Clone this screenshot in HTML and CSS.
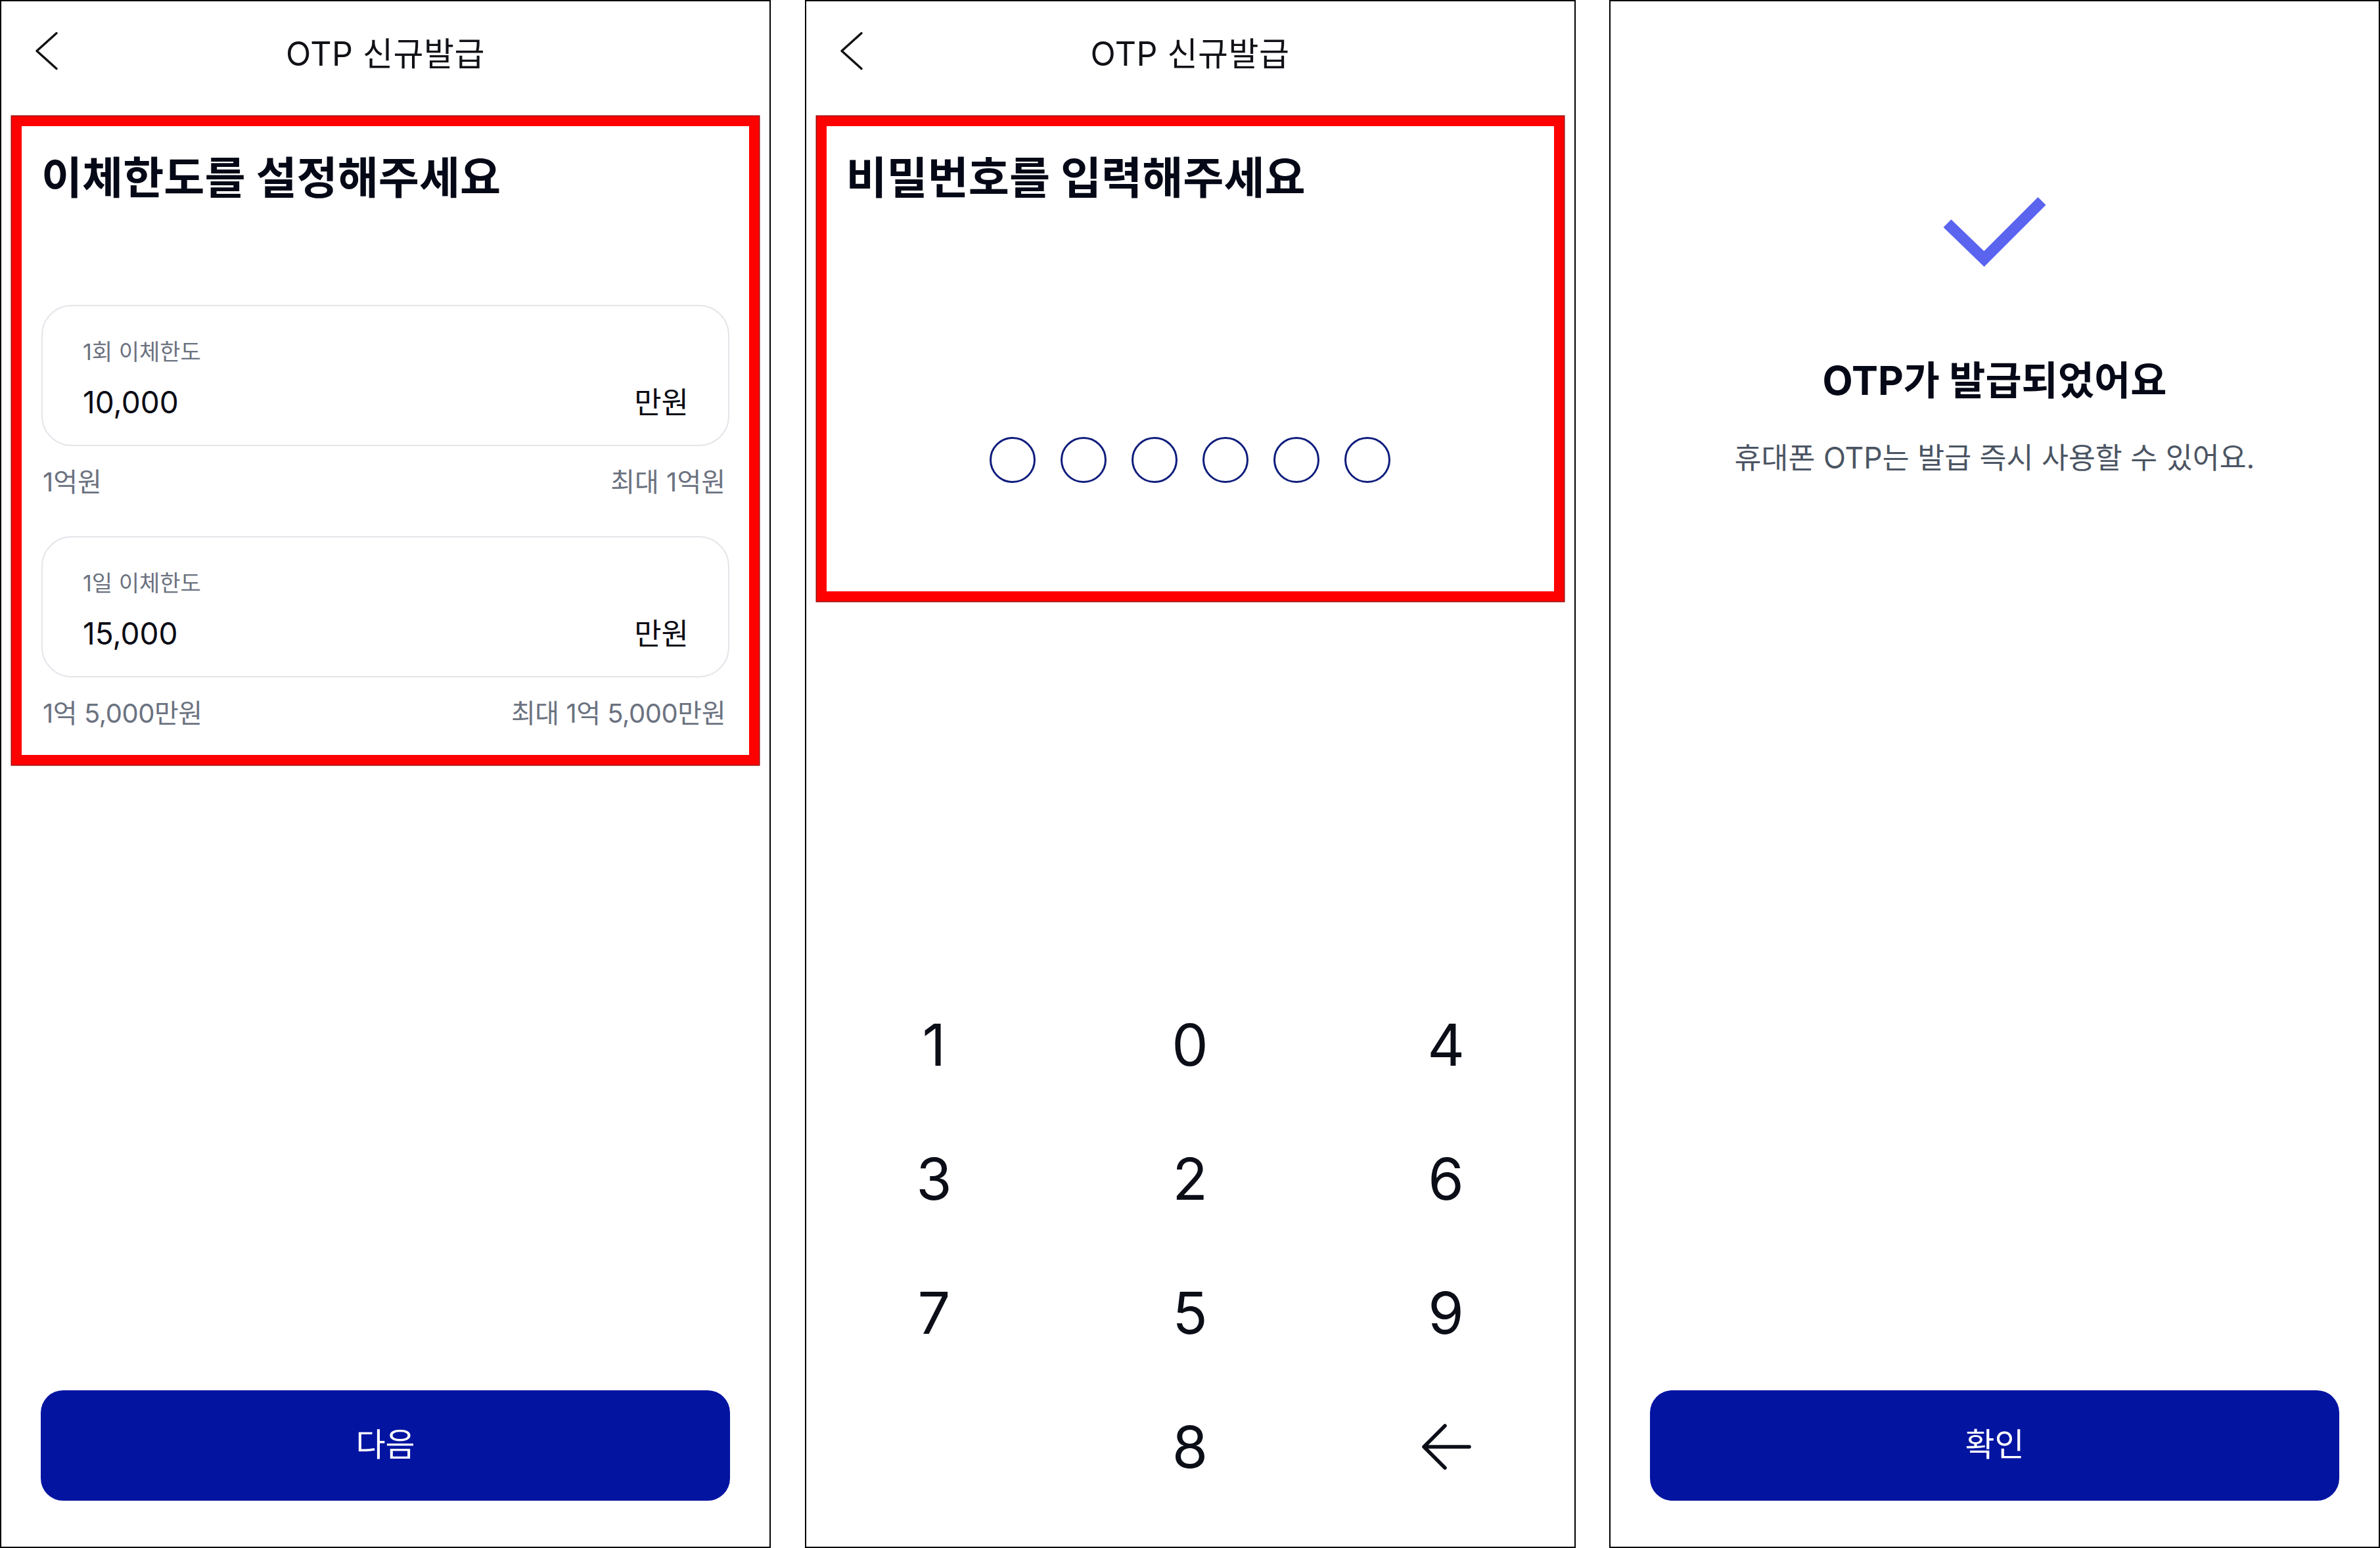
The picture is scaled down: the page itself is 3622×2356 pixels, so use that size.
FILE: index.html
```html
<!DOCTYPE html>
<html lang="ko">
<head>
<meta charset="utf-8">
<title>OTP 신규발급</title>
<link rel="stylesheet" href="styles.css">
</head>
<body>
<div class="screens">
  <section class="panel">
    <header class="topbar">
      <svg class="back" viewBox="0 0 40 64" width="40" height="64"><polyline points="36,2.5 6,29.5 36,56.5" fill="none" stroke="#111" stroke-width="3.5" stroke-linecap="round" stroke-linejoin="round"/></svg>
      <h1 class="title">OTP 신규발급</h1>
      <span></span>
    </header>
    <div class="mark mark-limit">
      <h2 class="heading">이체한도를 설정해주세요</h2>
      <div class="field">
        <div class="field-label">1회 이체한도</div>
        <div class="field-value"><span class="num">10,000</span><span class="unit">만원</span></div>
      </div>
      <div class="hint"><span>1억원</span><span>최대 1억원</span></div>
      <div class="field field-second">
        <div class="field-label">1일 이체한도</div>
        <div class="field-value"><span class="num">15,000</span><span class="unit">만원</span></div>
      </div>
      <div class="hint"><span class="tight">1억 5,000만원</span><span class="tight">최대 1억 5,000만원</span></div>
    </div>
    <div class="grow"></div>
    <button class="primary">다음</button>
  </section>

  <section class="panel">
    <header class="topbar">
      <svg class="back" viewBox="0 0 40 64" width="40" height="64"><polyline points="36,2.5 6,29.5 36,56.5" fill="none" stroke="#111" stroke-width="3.5" stroke-linecap="round" stroke-linejoin="round"/></svg>
      <h1 class="title">OTP 신규발급</h1>
      <span></span>
    </header>
    <div class="mark mark-pin">
      <h2 class="heading">비밀번호를 입력해주세요</h2>
      <div class="dots">
        <span class="dot"></span><span class="dot"></span><span class="dot"></span><span class="dot"></span><span class="dot"></span><span class="dot"></span>
      </div>
    </div>
    <div class="grow"></div>
    <div class="keypad">
      <span class="key">1</span><span class="key">0</span><span class="key">4</span>
      <span class="key">3</span><span class="key">2</span><span class="key">6</span>
      <span class="key">7</span><span class="key">5</span><span class="key">9</span>
      <span class="key"></span><span class="key">8</span>
      <span class="key"><svg viewBox="0 0 80 74" width="80" height="74"><path d="M6 37 H75 M6 37 L38 5 M6 37 L38 69" fill="none" stroke="#0b0d17" stroke-width="5.5" stroke-linecap="round" stroke-linejoin="round"/></svg></span>
    </div>
  </section>

  <section class="panel panel-done">
    <svg class="check" viewBox="0 0 160 130" width="160" height="130"><polyline points="7.5,50 63.5,104 151.5,16" fill="none" stroke="#5a64ee" stroke-width="17" stroke-linecap="butt" stroke-linejoin="miter"/></svg>
    <h2 class="done-title">OTP가 발급되었어요</h2>
    <p class="done-sub">휴대폰 OTP는 발급 즉시 사용할 수 있어요.</p>
    <div class="grow"></div>
    <button class="primary">확인</button>
  </section>
</div>
</body>
</html>
```

FILE: styles.css
```css
* { box-sizing: border-box; }

html, body {
  margin: 0;
  padding: 0;
  background: #ffffff;
}

body {
  font-family: Inter, "Noto Sans CJK KR", sans-serif;
  color: #0a0b14;
}

.screens {
  width: 3622px;
  height: 2356px;
  display: grid;
  grid-template-columns: repeat(3, 1173px);
  justify-content: space-between;
}

.panel {
  height: 2356px;
  border: 2px solid #000;
  display: flex;
  flex-direction: column;
  background: #fff;
}

.topbar {
  height: 160px;
  display: grid;
  grid-template-columns: 1fr auto 1fr;
  align-items: center;
}

.back {
  display: block;
  margin-left: 48px;
  margin-top: -4px;
}

.title {
  margin: 0;
  font-size: 50px;
  font-weight: 400;
  line-height: 156px;
  color: #111217;
  letter-spacing: 0.01em;
}

.mark {
  margin: 15px 16px 0;
  border: 15px solid #ff0000;
  box-shadow: 0 0 0 1.5px #9a0c0c;
}

.mark-limit {
  padding: 34px 30px 41px;
}

.mark-pin {
  height: 738px;
  padding: 34px 30px 0;
}

.heading {
  margin: 0;
  font-size: 67.5px;
  font-weight: 700;
  line-height: 90px;
  color: #050816;
}

.mark-limit .heading {
  margin-bottom: 148px;
}

.field {
  height: 215px;
  border: 2.5px solid #e4e6ea;
  border-radius: 46px;
  padding: 50px 60px 0 61px;
}

.field-second {
  margin-top: 60px;
}

.field-label {
  font-size: 34px;
  line-height: 40px;
  color: #6b7280;
}

.field-value {
  margin-top: 28px;
  display: flex;
  justify-content: space-between;
  align-items: baseline;
  line-height: 56px;
}

.num {
  font-size: 46px;
  color: #0a0b14;
}

.unit {
  font-size: 45px;
  color: #0a0b14;
}

.hint {
  margin-top: 33px;
  display: flex;
  justify-content: space-between;
  font-size: 40px;
  line-height: 44px;
  color: #6b7280;
  padding: 0 6px 0 2px;
}

.tight {
  letter-spacing: -0.012em;
}

.dots {
  margin-top: 349px;
  display: flex;
  justify-content: center;
  gap: 38px;
}

.dot {
  width: 70px;
  height: 70px;
  border: 3px solid #0f1d7c;
  border-radius: 50%;
}

.grow {
  flex: 1;
}

.keypad {
  display: grid;
  grid-template-columns: repeat(3, 1fr);
  grid-auto-rows: 204px;
  margin-bottom: 50px;
}

.key {
  display: flex;
  align-items: center;
  justify-content: center;
  font-size: 88px;
  line-height: 1;
  color: #0b0d17;
}

.primary {
  margin: 0 60px 70px;
  height: 168px;
  border: none;
  border-radius: 34px;
  background: #0314a1;
  color: #ffffff;
  font-family: Inter, "Noto Sans CJK KR", sans-serif;
  font-size: 49px;
  font-weight: 400;
  line-height: 1;
  padding: 0 0 4px;
}

.panel-done {
  align-items: stretch;
  padding-top: 288px;
}

.check {
  display: block;
  align-self: center;
}

.done-title {
  margin: 124px 0 0;
  text-align: center;
  font-size: 60px;
  font-weight: 700;
  line-height: 70px;
  color: #050816;
}

.done-sub {
  margin: 55px 0 0;
  text-align: center;
  font-size: 44.5px;
  line-height: 56px;
  color: #4b5563;
}
```
